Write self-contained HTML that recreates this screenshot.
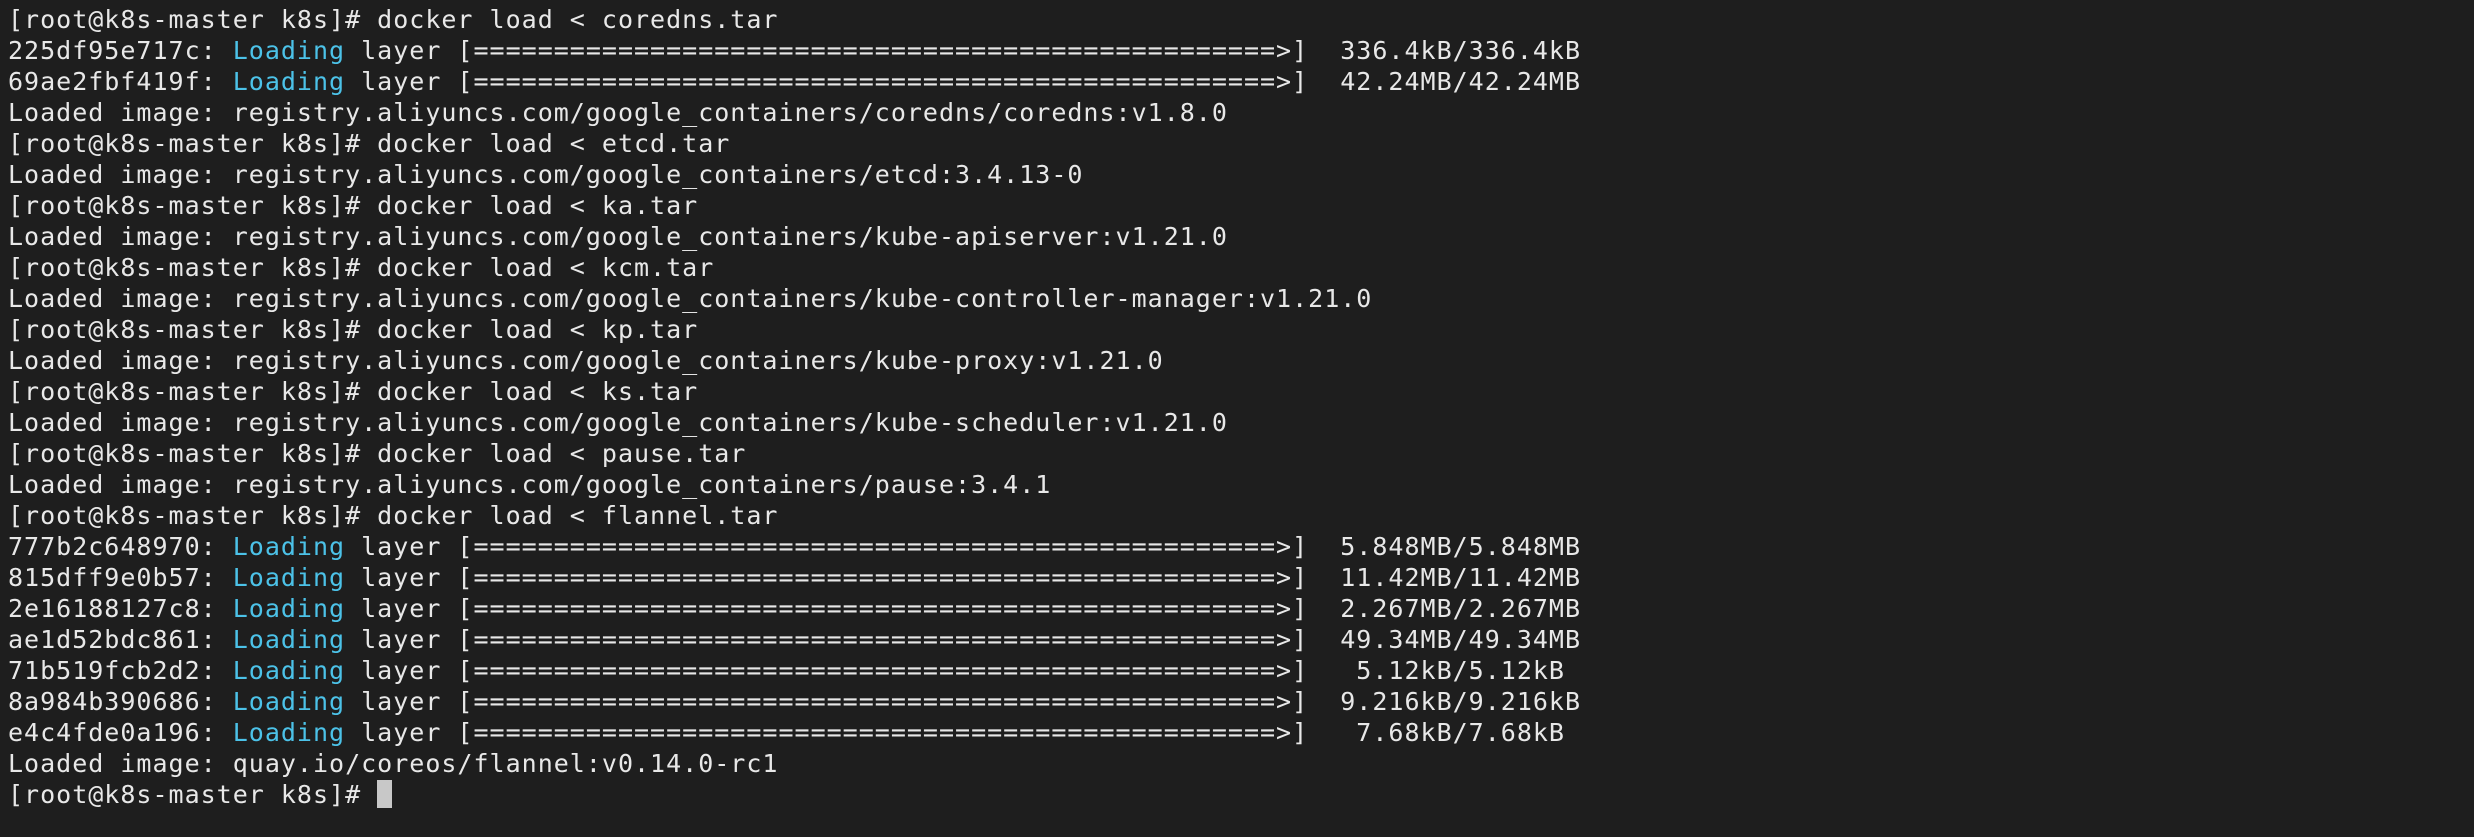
<!DOCTYPE html>
<html><head><meta charset="utf-8"><style>
html,body{margin:0;padding:0;background:#1e1e1e;width:2474px;height:837px;overflow:hidden}
pre{margin:0;padding:4px 0 0 8px;font-family:"DejaVu Sans Mono","Liberation Mono",monospace;font-size:25px;line-height:31px;color:#e8e8e8;letter-spacing:1px}
.c{color:#4cc2e8}
.cur{display:inline-block;width:15px;height:28px;background:#c8c8c8;vertical-align:-5px}
</style></head><body><pre>[root@k8s-master k8s]# docker load &lt; coredns.tar
225df95e717c: <span class="c">Loading</span> layer [==================================================>]  336.4kB/336.4kB
69ae2fbf419f: <span class="c">Loading</span> layer [==================================================>]  42.24MB/42.24MB
Loaded image: registry.aliyuncs.com/google_containers/coredns/coredns:v1.8.0
[root@k8s-master k8s]# docker load &lt; etcd.tar
Loaded image: registry.aliyuncs.com/google_containers/etcd:3.4.13-0
[root@k8s-master k8s]# docker load &lt; ka.tar
Loaded image: registry.aliyuncs.com/google_containers/kube-apiserver:v1.21.0
[root@k8s-master k8s]# docker load &lt; kcm.tar
Loaded image: registry.aliyuncs.com/google_containers/kube-controller-manager:v1.21.0
[root@k8s-master k8s]# docker load &lt; kp.tar
Loaded image: registry.aliyuncs.com/google_containers/kube-proxy:v1.21.0
[root@k8s-master k8s]# docker load &lt; ks.tar
Loaded image: registry.aliyuncs.com/google_containers/kube-scheduler:v1.21.0
[root@k8s-master k8s]# docker load &lt; pause.tar
Loaded image: registry.aliyuncs.com/google_containers/pause:3.4.1
[root@k8s-master k8s]# docker load &lt; flannel.tar
777b2c648970: <span class="c">Loading</span> layer [==================================================>]  5.848MB/5.848MB
815dff9e0b57: <span class="c">Loading</span> layer [==================================================>]  11.42MB/11.42MB
2e16188127c8: <span class="c">Loading</span> layer [==================================================>]  2.267MB/2.267MB
ae1d52bdc861: <span class="c">Loading</span> layer [==================================================>]  49.34MB/49.34MB
71b519fcb2d2: <span class="c">Loading</span> layer [==================================================>]   5.12kB/5.12kB
8a984b390686: <span class="c">Loading</span> layer [==================================================>]  9.216kB/9.216kB
e4c4fde0a196: <span class="c">Loading</span> layer [==================================================>]   7.68kB/7.68kB
Loaded image: quay.io/coreos/flannel:v0.14.0-rc1
[root@k8s-master k8s]# <span class="cur"></span></pre></body></html>
